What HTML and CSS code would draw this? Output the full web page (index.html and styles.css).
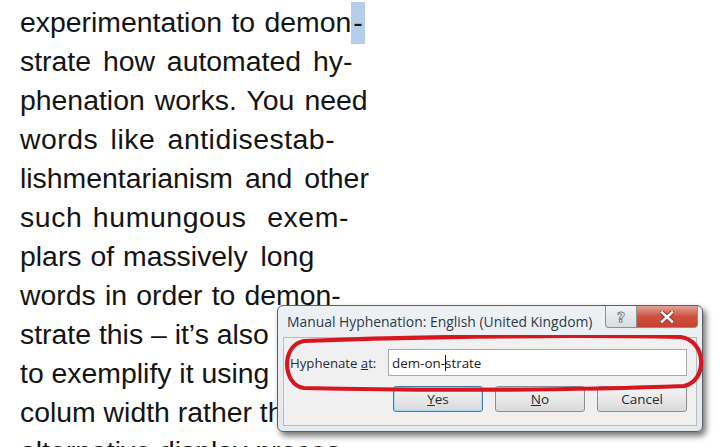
FILE: index.html
```html
<!DOCTYPE html>
<html>
<head>
<meta charset="utf-8">
<link rel="stylesheet" href="styles.css">
</head>
<body>
<div class="page">
  <div class="column">
    <div class="line l1">experimentation to demon<span class="sel">-</span></div>
    <div class="line l2">strate how automated hy-</div>
    <div class="line l3">phenation works. You need</div>
    <div class="line l4">words like antidisestab-</div>
    <div class="line l5">lishmentarianism and other</div>
    <div class="line l6">such humungous <span class="gap">exem-</span></div>
    <div class="line l7">plars of massively <span class="gap-s">long</span></div>
    <div class="line l8">words in order to demon-</div>
    <div class="line l9">strate this – it’s also</div>
    <div class="line l10">to exemplify it using</div>
    <div class="line l11">colum width rather than</div>
    <div class="line l12">alternative display proces-</div>
  </div>

  <div class="dialog">
    <div class="titlebar">
      <span class="title">Manual Hyphenation: English (United Kingdom)</span>
      <div class="caption">
        <span class="cap-btn help">?</span>
        <span class="cap-btn close">
          <svg width="14" height="12" viewBox="0 0 14 12">
            <path d="M2 1.5 L12 10.5 M12 1.5 L2 10.5" stroke="#8e2a20" stroke-width="4.4" stroke-linecap="square"/>
            <path d="M2 1.5 L12 10.5 M12 1.5 L2 10.5" stroke="#ffffff" stroke-width="2.6" stroke-linecap="square"/>
          </svg>
        </span>
      </div>
    </div>
    <div class="client">
      <div class="field-row">
        <span class="label">Hyphenate <u>a</u>t:</span>
        <div class="input">dem-on-<span class="caret"></span>strate</div>
      </div>
      <div class="buttons">
        <span class="btn focused"><u>Y</u>es</span>
        <span class="btn"><u>N</u>o</span>
        <span class="btn">Cancel</span>
      </div>
    </div>
    <svg class="loop" width="430" height="60" viewBox="0 0 430 60">
      <path d="M 24 6 C 150 1, 300 0, 400 2 C 427 5, 428 46, 404 51 C 300 55, 150 56, 24 53 C 3 51, 0 10, 24 6 Z" fill="none" stroke="#d51820" stroke-width="4.2" stroke-linejoin="round"/>
    </svg>
  </div>
</div>
</body>
</html>
```

FILE: styles.css
```css
html, body {
  margin: 0;
  padding: 0;
  background: #ffffff;
}

.page {
  position: relative;
  width: 720px;
  height: 447px;
  overflow: hidden;
}

.column {
  padding: 3px 0 0 20px;
  font-family: "Liberation Sans", Arial, sans-serif;
  font-size: 28.4px;
  line-height: 39px;
  color: #141414;
}

.line {
  white-space: nowrap;
}

.l1 { word-spacing: 1.5px; }
.l2 { word-spacing: 4px; }
.l3 { word-spacing: 2.2px; }
.l4 { word-spacing: 4px; letter-spacing: 0.5px; }
.l5 { word-spacing: 4px; }
.l6 { word-spacing: 2px; letter-spacing: 0.6px; }
.l7 { word-spacing: 1px; }
.l8 { word-spacing: 1.3px; }

.gap { margin-left: 10px; }
.gap-s { margin-left: 4px; }

.sel {
  background: #b3cdea;
  padding: 4px 2px 6px 2px;
}

.dialog {
  position: absolute;
  left: 277px;
  top: 305px;
  width: 424px;
  height: 125px;
  border: 1px solid #5a5f66;
  border-radius: 6px;
  background: linear-gradient(#eef1f4, #e6e9ec);
  box-shadow: 3px 4px 6px rgba(0, 0, 0, 0.55);
  font-family: "Open Sans", "Noto Sans", sans-serif;
  color: #1f2a36;
  display: flex;
  flex-direction: column;
}

.titlebar {
  height: 31px;
  display: flex;
  align-items: flex-start;
  justify-content: space-between;
  padding-left: 9px;
}

.title {
  margin-top: 6px;
  font-size: 13.9px;
  color: #2a3a4c;
  white-space: nowrap;
}

.caption {
  display: flex;
  margin-right: 4px;
}

.cap-btn {
  height: 21px;
  display: flex;
  align-items: center;
  justify-content: center;
  border: 1px solid #8a9099;
  border-top: none;
  font-family: "DejaVu Sans", sans-serif;
  font-weight: bold;
}

.help {
  width: 30px;
  border-radius: 0 0 0 4px;
  background: linear-gradient(#f2f3f5, #d8dbe0);
  color: #ffffff;
  font-size: 14px;
  -webkit-text-stroke: 1px #7d848d;
}

.close {
  width: 60px;
  border-left: none;
  border-radius: 0 0 4px 0;
  background: linear-gradient(#e2a49a, #cf5140 50%, #c7402e);
}

.client {
  flex: 1;
  margin: 0 5px 5px 5px;
  background: #f0f0f0;
  border: 1px solid #b8bcc2;
  display: flex;
  flex-direction: column;
  padding: 11px 9px 0 6px;
}

.field-row {
  display: flex;
  align-items: center;
}

.label {
  width: 98px;
  font-size: 13.2px;
  color: #1f2a36;
  white-space: nowrap;
}

.input {
  flex: 1;
  height: 25px;
  background: #ffffff;
  border: 1px solid #a5a9b0;
  display: flex;
  align-items: center;
  padding-left: 3px;
  font-size: 13.4px;
  color: #222;
}

.caret {
  display: inline-block;
  width: 1px;
  height: 16px;
  background: #222;
  margin-right: -1px;
}

.buttons {
  display: flex;
  justify-content: flex-end;
  gap: 12px;
  margin-top: 10px;
}

.btn {
  width: 88px;
  height: 24px;
  border: 1px solid #8d8d8d;
  border-radius: 3px;
  background: linear-gradient(#f4f4f4, #e8e8e8 50%, #d9d9d9);
  display: flex;
  align-items: center;
  justify-content: center;
  font-size: 13.5px;
  color: #1f2a36;
}

.btn.focused {
  border-color: #3d7bad;
  box-shadow: inset 0 0 0 1px #a8dcf6;
}

.loop {
  position: absolute;
  left: 2px;
  top: 29px;
}
```
